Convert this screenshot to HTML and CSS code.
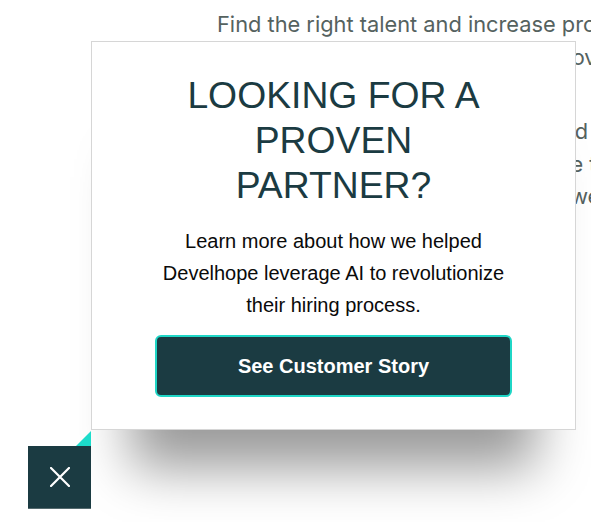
FILE: index.html
```html
<!DOCTYPE html>
<html lang="en">
<head>
<meta charset="utf-8">
<title>Customer Story</title>
<link rel="stylesheet" href="styles.css">
</head>
<body>
<main class="page">
  <section class="hero-copy">
    <p class="lead">
      <span class="line">Find the right talent and increase productivity</span>
      <span class="line">with an AI hiring platform that improves results</span>
    </p>
    <p class="lead">
      <span class="line">Screen every candidate quicker and assess them fairly</span>
      <span class="line">reduce your time to hire and secure top talent</span>
      <span class="line">predict true performance, so then we know who fits</span>
    </p>
  </section>
</main>

<div class="popup" role="dialog" aria-labelledby="popup-title">
  <h2 id="popup-title" class="popup-title">LOOKING FOR A PROVEN PARTNER?</h2>
  <p class="popup-text">Learn more about how we helped Develhope leverage AI to revolutionize their hiring process.</p>
  <a class="popup-btn" href="#">See Customer Story</a>
</div>

<button class="close-btn" aria-label="Close">
  <svg width="20" height="20" viewBox="0 0 20 20" aria-hidden="true">
    <path d="M1 1 L19 19 M19 1 L1 19" stroke="#ffffff" stroke-width="2.2" stroke-linecap="square" fill="none"/>
  </svg>
</button>
</body>
</html>
```
FILE: styles.css
```css
html, body {
  margin: 0;
  padding: 0;
  background: #ffffff;
  overflow: hidden;
  height: 100%;
}

.page {
  padding: 0 0 0 217px;
}

.hero-copy {
  font-family: Inter, "Noto Sans", sans-serif;
  font-size: 21.8px;
  line-height: 32.5px;
  color: #55625f;
  white-space: nowrap;
}

.lead {
  margin: 8px 0 42px;
}

.line {
  display: block;
}

.popup {
  position: absolute;
  left: 91px;
  top: 41px;
  width: 357px;
  padding: 31px 63px 32px;
  background: #ffffff;
  border: 1px solid #d6d6d6;
  box-shadow: 0 78px 50px -40px rgba(0, 0, 0, 0.4);
  text-align: center;
  font-family: "Liberation Sans", Arial, sans-serif;
}

.popup-title {
  margin: 0;
  font-size: 37.3px;
  line-height: 45px;
  font-weight: 400;
  color: #1b3b42;
}

.popup-text {
  margin: 17px 0 14px;
  font-size: 20px;
  line-height: 32px;
  color: #0a0a0a;
}

.popup-btn {
  display: flex;
  align-items: center;
  justify-content: center;
  box-sizing: border-box;
  height: 62px;
  border: 2px solid #1fd6c6;
  border-radius: 6px;
  background: #1b3b42;
  color: #ffffff;
  font-size: 20px;
  font-weight: 700;
  text-decoration: none;
}

.close-btn {
  position: fixed;
  left: 28px;
  top: 446px;
  width: 63px;
  height: 63px;
  padding: 0;
  border: 0;
  border-bottom: 1px solid #546a6e;
  background: #1b3b42;
  display: flex;
  align-items: center;
  justify-content: center;
  cursor: pointer;
}

.close-btn::before {
  content: "";
  position: absolute;
  right: 0;
  top: -15px;
  width: 15px;
  height: 15px;
  background: #1cdccb;
  clip-path: polygon(100% 0, 100% 100%, 0 100%);
}
```
